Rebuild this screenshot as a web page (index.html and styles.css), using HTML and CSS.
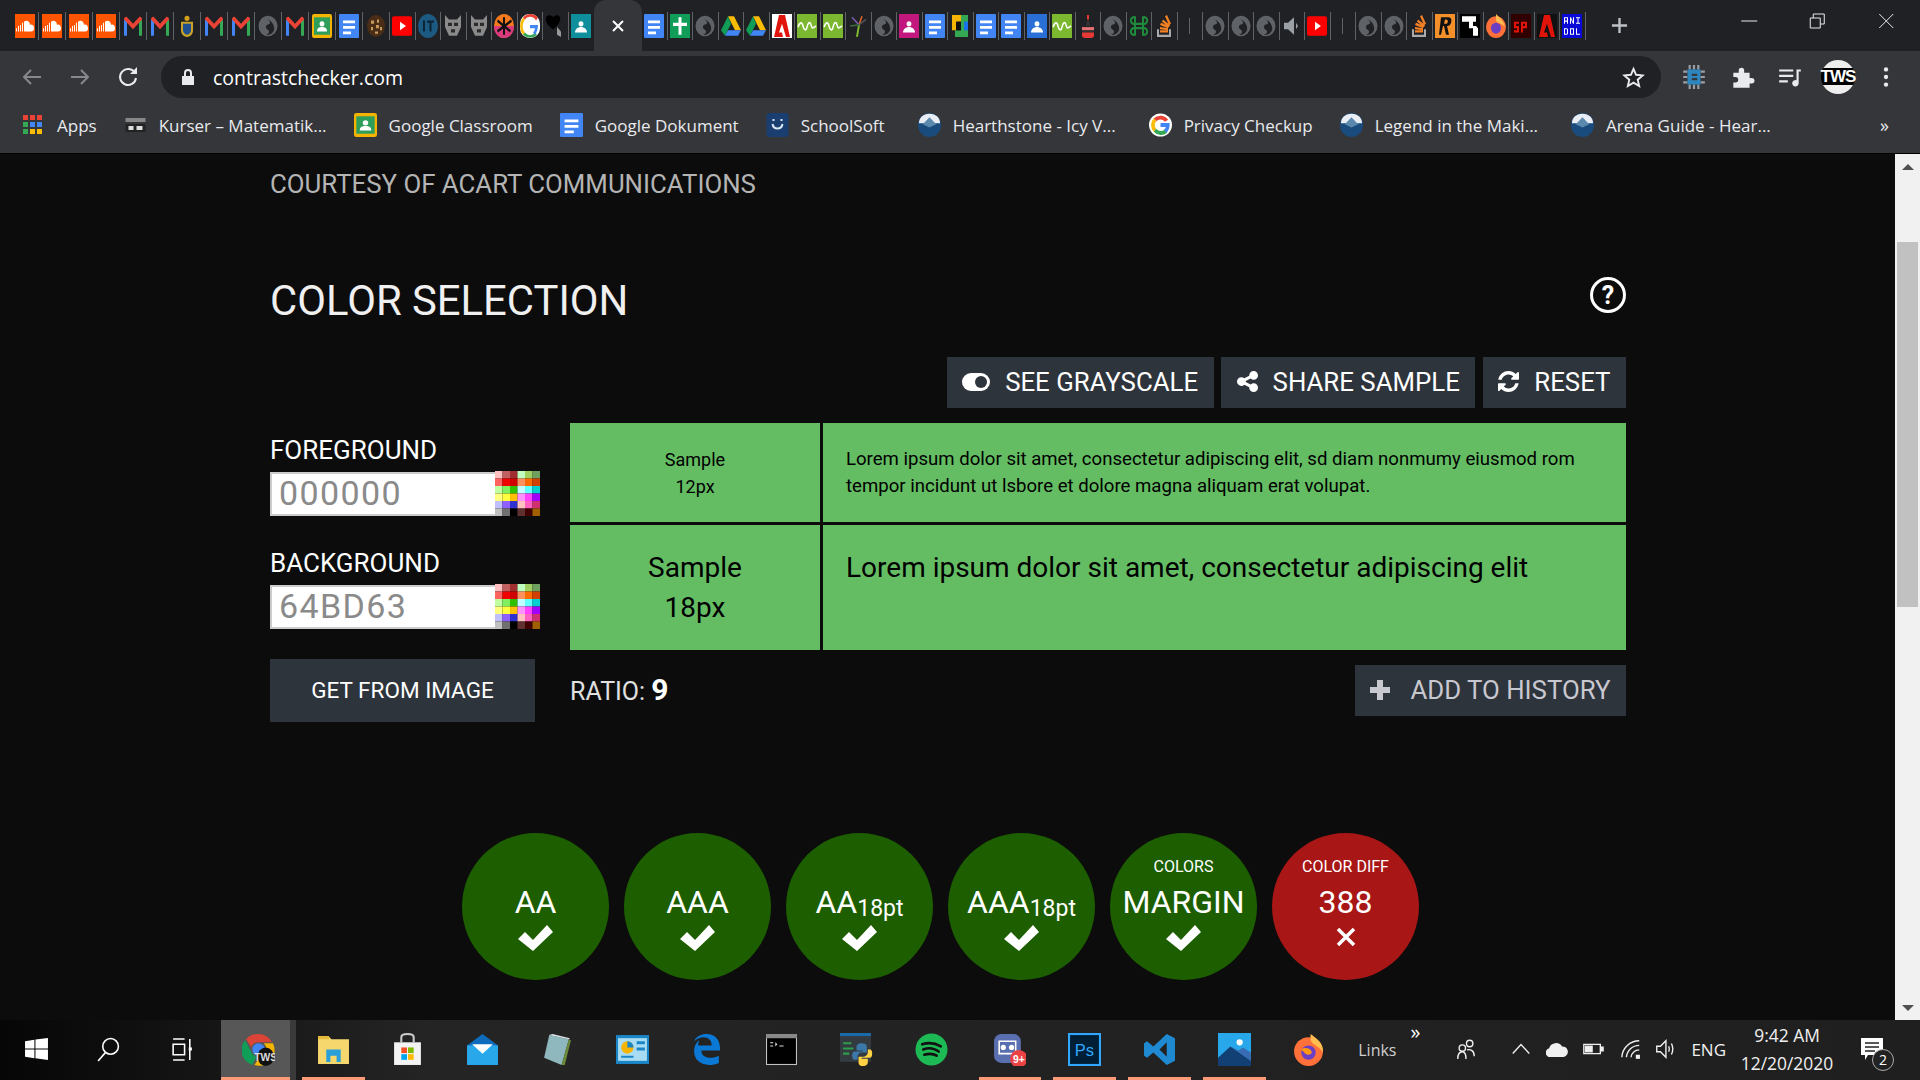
FILE: index.html
```html
<!DOCTYPE html>
<html lang="en">

<head>
  <meta charset="UTF-8">
  <meta name="viewport" content="width=device-width, initial-scale=1.0">
  <title>Contrast Checker</title>
  <link rel="stylesheet" href="styles.css">
</head>

<body>
  <!-- favicons and other small pictures used more than once -->
  <svg class="defs" width="0" height="0">
    <symbol id="sc" viewBox="0 0 20 22" preserveAspectRatio="none">
      <rect width="20" height="22" fill="#f50" />
      <path d="M1 16v-3h1v3zm2 0v-5h1v5zm2 0v-6h1v6zm2 0V8h1v8zm2 0V7c3-2 6 0 6 3 2-1 4 1 4 3s-1 3-3 3z" fill="#fff" />
    </symbol>
    <symbol id="gm" viewBox="0 0 20 22" preserveAspectRatio="none">
      <path d="M1 20V5l3 2v13z" fill="#4285f4" />
      <path d="M16 20V7l3-2v15z" fill="#34a853" />
      <path d="M1 5c0-2 2-3 3-2l6 6 6-6c1-1 3 0 3 2l-9 9z" fill="#ea4335" />
    </symbol>
    <symbol id="crest" viewBox="0 0 20 22" preserveAspectRatio="none">
      <circle cx="10" cy="4" r="2.5" fill="#d4a017" />
      <path d="M4 7h12v8c0 4-3 6-6 6s-6-2-6-6z" fill="#c9a227" />
      <path d="M6 9h8v6c0 2-2 4-4 4s-4-2-4-4z" fill="#1d4f91" />
    </symbol>
    <symbol id="globe" viewBox="0 0 20 22" preserveAspectRatio="none">
      <circle cx="10" cy="11" r="9.500" fill="#5f6368" />
      <path d="M7 4c3 1 5 2 5 4s-4 1-4 4 3 2 3 4-2 3-3 3c3 1 7-1 8-4s-1-9-9-11z" fill="#202124" />
    </symbol>
    <symbol id="classroom" viewBox="0 0 20 22" preserveAspectRatio="none">
      <rect width="20" height="22" rx="2" fill="#f5b400" />
      <rect x="2" y="3" width="16" height="16" fill="#2f9e5b" />
      <circle cx="10" cy="9" r="2.4" fill="#fff" />
      <path d="M5 16c0-3 2-4 5-4s5 1 5 4z" fill="#fff" />
    </symbol>
    <symbol id="teal" viewBox="0 0 20 22" preserveAspectRatio="none">
      <rect width="20" height="22" fill="#0f8f9c" />
      <circle cx="10" cy="9" r="2.4" fill="#fff" />
      <path d="M4 17c0-3 3-5 6-5s6 2 6 5z" fill="#fff" />
    </symbol>
    <symbol id="pink" viewBox="0 0 20 22" preserveAspectRatio="none">
      <rect width="20" height="22" fill="#c2187e" />
      <circle cx="10" cy="9" r="2.4" fill="#fff" />
      <path d="M4 17c0-3 3-5 6-5s6 2 6 5z" fill="#fff" />
    </symbol>
    <symbol id="bluep" viewBox="0 0 20 22" preserveAspectRatio="none">
      <rect width="20" height="22" fill="#2a6fd6" />
      <circle cx="10" cy="9" r="2.4" fill="#fff" />
      <path d="M4 17c0-3 3-5 6-5s6 2 6 5z" fill="#fff" />
    </symbol>
    <symbol id="doc" viewBox="0 0 20 22" preserveAspectRatio="none">
      <rect width="20" height="22" rx="1" fill="#4285f4" />
      <path d="M4 6h12v2.500H4zm0 5h12v2.500H4zm0 5h8v2.500H4z" fill="#fff" />
    </symbol>
    <symbol id="cookie" viewBox="0 0 20 22" preserveAspectRatio="none">
      <ellipse cx="10" cy="11" rx="9" ry="10" fill="#4a2d16" />
      <path d="M5 6h3v3H5zm6-1h2v3h-2zm-6 7h2v3H5zm5-2h3v3h-3zm-1 6h3v2H9zm5-4h2v3h-2z" fill="#c79a5a" />
    </symbol>
    <symbol id="yt" viewBox="0 0 20 22" preserveAspectRatio="none">
      <rect y="2" width="20" height="18" rx="2" fill="#f00" />
      <path d="M8 7l6 4-6 4z" fill="#fff" />
    </symbol>
    <symbol id="wolf" viewBox="0 0 20 22" preserveAspectRatio="none">
      <path d="M2 1l4 4h8l4-4v11l-4 8H6l-4-8z" fill="#8a8a8a" />
      <path d="M5 8h4v3H5zm6 0h4v3h-4zM8 14h4v3H8z" fill="#2b2b2b" />
    </symbol>
    <symbol id="ast" viewBox="0 0 20 22" preserveAspectRatio="none">
      <ellipse cx="10" cy="11" rx="10" ry="11" fill="#f4791f" />
      <path d="M0 11h20c0 6-4 11-10 11S0 17 0 11z" fill="#d93a7c" />
      <path d="M9 3h2v16H9zM3 7l1-2 13 10-1 2zm14-2l1 2L4 17l-1-2z" fill="#111" />
    </symbol>
    <symbol id="g" viewBox="0 0 20 22" preserveAspectRatio="none">
      <rect width="20" height="22" rx="9" fill="#fff" />
      <path d="M16 6a7 8 0 0 0-11-1L3 3.500a10 10 0 0 1 15 0z" fill="#ea4335" />
      <path d="M5 5a7 8 0 0 0 0 12l-2 2a10 11 0 0 1 0-15.500z" fill="#fbbc05" />
      <path d="M5 17a7 8 0 0 0 10 0l2 2a10 10 0 0 1-14 0z" fill="#34a853" />
      <path d="M10 10h8c0 3-1 7-3 9l-2-2c1-1 2-3 2-4h-5z" fill="#4285f4" />
    </symbol>
    <symbol id="heart" viewBox="0 0 20 22" preserveAspectRatio="none">
      <path d="M1 3c2-3 6-2 7 0 2-2 5-3 7 0 1 3-1 7-7 11C3 11 0 7 1 3z" fill="#000" />
      <path d="M12 12l4 4v5l-4-2z" fill="#999" />
    </symbol>
    <symbol id="cross" viewBox="0 0 20 22" preserveAspectRatio="none">
      <rect width="20" height="22" fill="#0f9d58" />
      <path d="M8.500 3h3v5H17v3h-5.500v8h-3v-8H3V8h5.500z" fill="#fff" />
    </symbol>
    <symbol id="drive" viewBox="0 0 20 22" preserveAspectRatio="none">
      <path d="M7 2h6l7 13h-6z" fill="#fbbc05" />
      <path d="M7 2l3 7-6 11-4-5z" fill="#0f9d58" />
      <path d="M4 20l3-5h13l-3 5z" fill="#4285f4" />
    </symbol>
    <symbol id="adobe" viewBox="0 0 20 22" preserveAspectRatio="none">
      <rect width="20" height="22" fill="#fff" />
      <path d="M7 1h6l5 20h-4l-4-12-3 8h3l1 4H2z" fill="#e1140b" />
    </symbol>
    <symbol id="adobek" viewBox="0 0 20 22" preserveAspectRatio="none">
      <rect width="20" height="22" fill="#111" />
      <path d="M7 1h6l5 20h-4l-4-12-3 8h3l1 4H2z" fill="#e1140b" />
    </symbol>
    <symbol id="wave" viewBox="0 0 20 22" preserveAspectRatio="none">
      <rect width="20" height="22" fill="#7cb82f" />
      <path d="M1 12c2-5 4-5 5-1s3 5 4 1 3-6 4-2 2 3 5 1" fill="none" stroke="#fff" stroke-width="1.500" />
    </symbol>
    <symbol id="pin" viewBox="0 0 20 22" preserveAspectRatio="none">
      <path d="M9 21l2-11" stroke="#7cb82f" stroke-width="2" />
      <path d="M11 10l3-8" stroke="#e0662a" stroke-width="1.500" />
      <path d="M11 10l7-5" stroke="#555" stroke-width="1.500" />
      <path d="M11 10L4 3" stroke="#7a5fb0" stroke-width="1.500" />
      <path d="M11 10l-9 1" stroke="#3a6a3a" stroke-width="1.500" />
    </symbol>
    <symbol id="meet" viewBox="0 0 20 22" preserveAspectRatio="none">
      <path d="M2 1h9v6H7v8H2z" fill="#f5b400" />
      <path d="M11 1h7v20H5v-6h6z" fill="#34a853" />
      <rect x="6" y="7" width="5" height="8" fill="#111" />
      <path d="M14 7h4v8h-4z" fill="#1a73e8" />
    </symbol>
    <symbol id="bottle" viewBox="0 0 20 22" preserveAspectRatio="none">
      <path d="M9 1h2v4H9z" fill="#e53935" />
      <path d="M9 6h2l1 5H8z" fill="#333" />
      <path d="M4 12h12v3H4z" fill="#e57373" />
      <path d="M4 15h12v2H4z" fill="#333" />
      <path d="M4 17h12v3c0 1-1 2-3 2H7c-2 0-3-1-3-2z" fill="#e53935" />
    </symbol>
    <symbol id="knot" viewBox="0 0 20 22" preserveAspectRatio="none">
      <path d="M6 3a3 3 0 1 0-2 6h12a3 3 0 1 0-2-6v16a3 3 0 1 0 2-6H4a3 3 0 1 0 2 6z" fill="none" stroke="#1e8a3c" stroke-width="2" />
    </symbol>
    <symbol id="stack" viewBox="0 0 20 22" preserveAspectRatio="none">
      <path d="M3 14v7h14v-7h-2v5H5v-5z" fill="#aaa" />
      <path d="M6 15h8v2H6zm0-3l8 1v2l-8-1zm1-4l8 3-1 2-8-3zm2-3l7 5-1 2-7-5zm4-4l4 8-2 1-4-8z" fill="#f48024" />
    </symbol>
    <symbol id="speaker" viewBox="0 0 20 22" preserveAspectRatio="none">
      <path d="M2 8h4l6-5v16l-6-5H2z" fill="#9aa0a6" />
      <path d="M14 8l2 3-2 3z" fill="#9aa0a6" />
    </symbol>
    <symbol id="blackbox" viewBox="0 0 20 22" preserveAspectRatio="none">
      <rect width="20" height="22" fill="#000" />
      <path d="M2 2h14v5h-3v4h3l2 2v7h-5v-7H9V7H2z" fill="#fff" />
    </symbol>
    <symbol id="firefox" viewBox="0 0 20 22" preserveAspectRatio="none">
      <ellipse cx="10" cy="12" rx="10" ry="10" fill="#ff7139" />
      <path d="M10 0c3 3 8 6 9 12-3-4-8-3-9-6z" fill="#ffbd4f" />
      <circle cx="10" cy="13" r="5" fill="#6a3fc4" />
    </symbol>
    <symbol id="hearth" viewBox="0 0 24 28" preserveAspectRatio="none">
      <ellipse cx="12" cy="14" rx="12" ry="14" fill="#1a4b7d" />
      <path d="M12 1C5 1 1 6 1 12h22c0-6-4-11-11-11z" fill="#e8eef3" />
      <path d="M5 13l7-8 7 8-7 4z" fill="#5b88ad" />
    </symbol>
    <symbol id="gcolor" viewBox="0 0 24 24">
      <circle cx="12" cy="12" r="12" fill="#fff" />
      <path d="M20 6.500a10 10 0 0 0-15-1.500L7.500 8a6 6 0 0 1 9 .5z" fill="#ea4335" />
      <path d="M5 5a10 10 0 0 0 0 14l2.500-3a6 6 0 0 1 0-8z" fill="#fbbc05" />
      <path d="M5 19a10 10 0 0 0 14 1l-3-3a6 6 0 0 1-8.500-1z" fill="#34a853" />
      <path d="M12 10h9.500c.5 4-1 8-3 10l-3-3c1-.8 1.800-2 2-3H12z" fill="#4285f4" />
    </symbol>
    <symbol id="check" viewBox="0 0 37 28">
      <path d="M1 15l7-7 8 8L30 1l6 7-20 19z" fill="#fff" />
    </symbol>
    <symbol id="swatches" viewBox="0 0 6 6" preserveAspectRatio="none">
      <rect width="1" height="1" x="0" y="0" fill="#ffc0c0" /><rect width="1" height="1" x="1" y="0" fill="#c06060" /><rect width="1" height="1" x="2" y="0" fill="#a03030" /><rect width="1" height="1" x="3" y="0" fill="#c0ffc0" /><rect width="1" height="1" x="4" y="0" fill="#a0d060" /><rect width="1" height="1" x="5" y="0" fill="#70a060" />
      <rect width="1" height="1" x="0" y="1" fill="#ff6060" /><rect width="1" height="1" x="1" y="1" fill="#f00000" /><rect width="1" height="1" x="2" y="1" fill="#d00000" /><rect width="1" height="1" x="3" y="1" fill="#ff9060" /><rect width="1" height="1" x="4" y="1" fill="#ff6a00" /><rect width="1" height="1" x="5" y="1" fill="#d04000" />
      <rect width="1" height="1" x="0" y="2" fill="#c0ffa0" /><rect width="1" height="1" x="1" y="2" fill="#80f060" /><rect width="1" height="1" x="2" y="2" fill="#30c000" /><rect width="1" height="1" x="3" y="2" fill="#c0ffff" /><rect width="1" height="1" x="4" y="2" fill="#60ffff" /><rect width="1" height="1" x="5" y="2" fill="#00d0d0" />
      <rect width="1" height="1" x="0" y="3" fill="#ffff80" /><rect width="1" height="1" x="1" y="3" fill="#ffff40" /><rect width="1" height="1" x="2" y="3" fill="#ffc000" /><rect width="1" height="1" x="3" y="3" fill="#ff90ff" /><rect width="1" height="1" x="4" y="3" fill="#ff40ff" /><rect width="1" height="1" x="5" y="3" fill="#a000ff" />
      <rect width="1" height="1" x="0" y="4" fill="#c0c0ff" /><rect width="1" height="1" x="1" y="4" fill="#9060ff" /><rect width="1" height="1" x="2" y="4" fill="#3030d0" /><rect width="1" height="1" x="3" y="4" fill="#ffc0c0" /><rect width="1" height="1" x="4" y="4" fill="#ff60c0" /><rect width="1" height="1" x="5" y="4" fill="#d03070" />
      <rect width="1" height="1" x="0" y="5" fill="#c0c0c0" /><rect width="1" height="1" x="1" y="5" fill="#707070" /><rect width="1" height="1" x="2" y="5" fill="#000000" /><rect width="1" height="1" x="3" y="5" fill="#603030" /><rect width="1" height="1" x="4" y="5" fill="#400000" /><rect width="1" height="1" x="5" y="5" fill="#a06000" />
    </symbol>
  </svg>

  <!-- tabs -->
  <div class="tabstrip">
    <div class="tab wide"><svg class="fav"><use href="#sc" /></svg></div>
    <div class="tab wide"><svg class="fav"><use href="#sc" /></svg></div>
    <div class="tab wide"><svg class="fav"><use href="#sc" /></svg></div>
    <div class="tab wide"><svg class="fav"><use href="#sc" /></svg></div>
    <div class="tab wide"><svg class="fav"><use href="#gm" /></svg></div>
    <div class="tab wide"><svg class="fav"><use href="#gm" /></svg></div>
    <div class="tab wide"><svg class="fav"><use href="#crest" /></svg></div>
    <div class="tab wide"><svg class="fav"><use href="#gm" /></svg></div>
    <div class="tab wide"><svg class="fav"><use href="#gm" /></svg></div>
    <div class="tab wide"><svg class="fav"><use href="#globe" /></svg></div>
    <div class="tab wide"><svg class="fav"><use href="#gm" /></svg></div>
    <div class="tab wide"><svg class="fav"><use href="#classroom" /></svg></div>
    <div class="tab wide"><svg class="fav"><use href="#doc" /></svg></div>
    <div class="tab wide"><svg class="fav"><use href="#cookie" /></svg></div>
    <div class="tab"><svg class="fav"><use href="#yt" /></svg></div>
    <div class="tab">
      <svg class="fav" viewBox="0 0 20 22" preserveAspectRatio="none">
        <ellipse cx="10" cy="11" rx="10" ry="11" fill="#1c5a82" />
        <path d="M5 6h2v10H5zM9 6h7v2h-2.500v8h-2V8H9z" fill="#0b2436" />
      </svg>
    </div>
    <div class="tab"><svg class="fav"><use href="#wolf" /></svg></div>
    <div class="tab"><svg class="fav"><use href="#wolf" /></svg></div>
    <div class="tab"><svg class="fav"><use href="#ast" /></svg></div>
    <div class="tab"><svg class="fav"><use href="#g" /></svg></div>
    <div class="tab"><svg class="fav"><use href="#heart" /></svg></div>
    <div class="tab no-sep"><svg class="fav"><use href="#teal" /></svg></div>
    <div class="tab-active">
      <svg class="tab-close" viewBox="0 0 14 14"><path d="M2 2l10 10M12 2L2 12" /></svg>
    </div>
    <div class="tab"><svg class="fav"><use href="#doc" /></svg></div>
    <div class="tab"><svg class="fav"><use href="#cross" /></svg></div>
    <div class="tab"><svg class="fav"><use href="#globe" /></svg></div>
    <div class="tab"><svg class="fav"><use href="#drive" /></svg></div>
    <div class="tab"><svg class="fav"><use href="#drive" /></svg></div>
    <div class="tab"><svg class="fav"><use href="#adobe" /></svg></div>
    <div class="tab"><svg class="fav"><use href="#wave" /></svg></div>
    <div class="tab"><svg class="fav"><use href="#wave" /></svg></div>
    <div class="tab"><svg class="fav"><use href="#pin" /></svg></div>
    <div class="tab"><svg class="fav"><use href="#globe" /></svg></div>
    <div class="tab"><svg class="fav"><use href="#pink" /></svg></div>
    <div class="tab"><svg class="fav"><use href="#doc" /></svg></div>
    <div class="tab"><svg class="fav"><use href="#meet" /></svg></div>
    <div class="tab"><svg class="fav"><use href="#doc" /></svg></div>
    <div class="tab"><svg class="fav"><use href="#doc" /></svg></div>
    <div class="tab"><svg class="fav"><use href="#bluep" /></svg></div>
    <div class="tab"><svg class="fav"><use href="#wave" /></svg></div>
    <div class="tab"><svg class="fav"><use href="#bottle" /></svg></div>
    <div class="tab"><svg class="fav"><use href="#globe" /></svg></div>
    <div class="tab"><svg class="fav"><use href="#knot" /></svg></div>
    <div class="tab"><svg class="fav"><use href="#stack" /></svg></div>
    <div class="tab tab-blank"><span class="tick"></span></div>
    <div class="tab"><svg class="fav"><use href="#globe" /></svg></div>
    <div class="tab"><svg class="fav"><use href="#globe" /></svg></div>
    <div class="tab"><svg class="fav"><use href="#globe" /></svg></div>
    <div class="tab"><svg class="fav"><use href="#speaker" /></svg></div>
    <div class="tab"><svg class="fav"><use href="#yt" /></svg></div>
    <div class="tab tab-blank"><span class="tick"></span></div>
    <div class="tab"><svg class="fav"><use href="#globe" /></svg></div>
    <div class="tab"><svg class="fav"><use href="#globe" /></svg></div>
    <div class="tab"><svg class="fav"><use href="#stack" /></svg></div>
    <div class="tab">
      <svg class="fav" viewBox="0 0 20 22" preserveAspectRatio="none">
        <rect width="20" height="22" fill="#f4902a" />
        <path d="M6 3h7c3 0 4 2 3 5s-3 3-4 3l2 8h-3l-2-8h-1l-2 8H4zm4 2l-1 4h2c2 0 3-4 0-4z" fill="#111" />
      </svg>
    </div>
    <div class="tab"><svg class="fav"><use href="#blackbox" /></svg></div>
    <div class="tab"><svg class="fav"><use href="#firefox" /></svg></div>
    <div class="tab">
      <svg class="fav" viewBox="0 0 20 22" preserveAspectRatio="none">
        <rect width="20" height="22" fill="#300000" />
        <path d="M3 7h5v2H5v2h3v6H3v-2h3v-2H3zm7 0h6v6h-4v4h-2zm2 2v2h2V9z" fill="#e1140b" />
      </svg>
    </div>
    <div class="tab"><svg class="fav"><use href="#adobek" /></svg></div>
    <div class="tab">
      <svg class="fav" viewBox="0 0 20 22" preserveAspectRatio="none">
        <rect width="20" height="22" fill="#0a0ad6" />
        <path d="M2 3h4v6H5V7H3v2H2zm1 1v2h2V4zm5-1h1l2 4V3h1v6h-1L9 5v4H8zm6 0h4v1h-1.500v4H18v1h-4V8h1.500V4H14zM2 13h3l1 1v4l-1 1H2zm1 1v4h2v-4zm5-1h4v6H8zm1 1v4h2v-4zm5-1h1v5h3v1h-4z" fill="#fff" />
      </svg>
    </div>
    <svg class="new-tab" viewBox="0 0 18 18"><path d="M9 1v16M1 9h16" /></svg>
    <div class="window-btns">
      <svg class="win-btn" viewBox="0 0 16 16"><path d="M0 8h16" /></svg>
      <svg class="win-btn" viewBox="0 0 16 16"><path d="M1 5h10v10H1zM4 5V1h11v10h-4" /></svg>
      <svg class="win-btn" viewBox="0 0 16 16"><path d="M1 1l14 14M15 1L1 15" /></svg>
    </div>
  </div>

  <!-- address bar -->
  <div class="toolbar">
    <svg class="nav-btn dim" viewBox="0 0 24 24"><path d="M21 12H4M11 5l-7 7 7 7" /></svg>
    <svg class="nav-btn dim" viewBox="0 0 24 24"><path d="M3 12h17M13 5l7 7-7 7" /></svg>
    <svg class="nav-btn" viewBox="0 0 24 24"><path d="M19 8a8 8 0 1 0 1 5" /><path class="solid" d="M14 9h7V2z" /></svg>
    <div class="omnibox">
      <svg class="lock" viewBox="0 0 14 18"><path d="M1 8h12v9H1z" /><path class="ring" d="M4 8V5a3 3 0 0 1 6 0v3" /></svg>
      <span class="url">contrastchecker.com</span>
      <svg class="star" viewBox="0 0 24 24"><path d="M12 3l2.700 6.200 6.800.600-5.100 4.500 1.500 6.600L12 17.400 6.100 20.900l1.500-6.600L2.500 9.800l6.800-.600z" /></svg>
    </div>
    <div class="ext-btns">
      <svg class="ext" viewBox="0 0 24 24"><path d="M2 7h4M2 12h4M2 17h4M18 7h4M18 12h4M18 17h4M8 1v4M12 1v4M16 1v4M8 19v4M12 19v4M16 19v4" stroke="#9aa0a6" stroke-width="2" /><rect x="6" y="5" width="12" height="14" fill="#2d86bd" /><rect x="10" y="9" width="5" height="2" fill="#35363a" /><rect x="10" y="13" width="5" height="2" fill="#35363a" /></svg>
      <svg class="ext" viewBox="0 0 24 24"><path d="M4 8h5V6a2.500 2.500 0 0 1 5 0v2h5v5h2a2.500 2.500 0 0 1 0 5h-2v4H4v-5h2a2.500 2.500 0 0 0 0-5H4z" fill="#e8eaed" /></svg>
      <svg class="ext" viewBox="0 0 24 24"><path d="M2 5h13v2H2zm0 5h13v2H2zm0 5h8v2H2zm16-10h4v2h-2v11a3 3 0 1 1-2-3z" fill="#e8eaed" /></svg>
      <div class="ext-slot">
        <div class="avatar">TWS</div>
      </div>
      <svg class="ext" viewBox="0 0 24 24"><circle cx="12" cy="5" r="2" fill="#e8eaed" /><circle cx="12" cy="12" r="2" fill="#e8eaed" /><circle cx="12" cy="19" r="2" fill="#e8eaed" /></svg>
    </div>
  </div>

  <!-- bookmarks -->
  <div class="bookmarks">
    <a class="mark apps-mark">
      <svg class="mark-ico apps" viewBox="0 0 20 20">
        <path fill="#ea4335" d="M0 0h5v5H0zM7 0h5v5H7zM14 0h5v5h-5z" />
        <path fill="#4285f4" d="M7 7h5v5H7zM14 7h5v5h-5z" />
        <path fill="#34a853" d="M0 7h5v5H0zM0 14h5v5H0z" />
        <path fill="#fbbc05" d="M7 14h5v5H7zM14 14h5v5h-5z" />
      </svg>Apps
    </a>
    <a class="mark">
      <svg class="mark-ico" viewBox="0 0 22 24"><path d="M1 5h20v4H1z" fill="#888" /><path d="M1 11h20v8H1z" fill="#222" /><path d="M4 13h5v4H4zm8 0h6v4h-6z" fill="#ddd" /></svg>Kurser – Matematik...
    </a>
    <a class="mark"><svg class="mark-ico"><use href="#classroom" /></svg>Google Classroom</a>
    <a class="mark"><svg class="mark-ico"><use href="#doc" /></svg>Google Dokument</a>
    <a class="mark">
      <svg class="mark-ico" viewBox="0 0 22 24"><rect width="22" height="24" rx="3" fill="#1a3e70" /><path d="M6 11c1 6 9 6 10 0" fill="none" stroke="#d8e6f5" stroke-width="2" /><path d="M6 6h2v2H6zm8 0h2v2h-2z" fill="#d8e6f5" /></svg>SchoolSoft
    </a>
    <a class="mark pushed"><svg class="mark-ico"><use href="#hearth" /></svg>Hearthstone - Icy V...</a>
    <a class="mark pushed"><svg class="mark-ico"><use href="#gcolor" /></svg>Privacy Checkup</a>
    <a class="mark"><svg class="mark-ico"><use href="#hearth" /></svg>Legend in the Maki...</a>
    <a class="mark pushed"><svg class="mark-ico"><use href="#hearth" /></svg>Arena Guide - Hear...</a>
    <span class="more-marks">»</span>
  </div>

  <!-- the page -->
  <div class="viewport">
    <main class="page">
      <p class="courtesy">COURTESY OF ACART COMMUNICATIONS</p>

      <div class="title-row">
        <h2>COLOR SELECTION</h2>
        <svg class="help" viewBox="0 0 36 36">
          <circle cx="18" cy="18" r="16.500" />
          <text x="18" y="27" text-anchor="middle">?</text>
        </svg>
      </div>

      <div class="actions">
        <button class="btn">
          <svg class="btn-ico toggle" viewBox="0 0 28 18"><rect width="28" height="18" rx="9" fill="#fff" /><circle cx="19" cy="9" r="6" fill="#2e343b" /></svg>
          SEE GRAYSCALE
        </button>
        <button class="btn">
          <svg class="btn-ico" viewBox="128 128 1536 1536"><path d="M1344 1024q133 0 226.500 93.500t93.500 226.500-93.500 226.500-226.500 93.500-226.500-93.500-93.500-226.500q0-12 2-34l-360-180q-92 86-218 86-133 0-226.500-93.500t-93.500-226.500 93.500-226.500 226.500-93.500q126 0 218 86l360-180q-2-22-2-34 0-133 93.500-226.500t226.500-93.500 226.500 93.500 93.500 226.500-93.500 226.500-226.500 93.500q-126 0-218-86l-360 180q2 22 2 34t-2 34l360 180q92-86 218-86z" fill="#fff" /></svg>
          SHARE SAMPLE
        </button>
        <button class="btn">
          <svg class="btn-ico" viewBox="0 0 1536 1536"><path d="M1511 928q0 5-1 7-64 268-268 434.500t-478 166.500q-146 0-282.500-55t-243.500-157l-129 129q-19 19-45 19t-45-19-19-45v-448q0-26 19-45t45-19h448q26 0 45 19t19 45-19 45l-137 137q71 66 161 102t187 36q134 0 250-65t186-179q11-17 53-117 8-23 30-23h192q13 0 22.500 9.500t9.500 22.500zm25-800v448q0 26-19 45t-45 19h-448q-26 0-45-19t-19-45 19-45l138-138q-148-137-349-137-134 0-250 65t-186 179q-11 17-53 117-8 23-30 23h-199q-13 0-22.500-9.500t-9.500-22.500v-7q65-268 270-434.500t480-166.500q146 0 284 55.500t245 156.500l130-129q19-19 45-19t45 19 19 45z" fill="#fff" /></svg>
          RESET
        </button>
      </div>

      <div class="selection">
        <div class="colors">
          <label class="field-label">FOREGROUND</label>
          <div class="picker">
            <input class="hex" type="text" value="000000">
            <svg class="swatches"><use href="#swatches" /></svg>
          </div>
          <label class="field-label second">BACKGROUND</label>
          <div class="picker">
            <input class="hex" type="text" value="64BD63">
            <svg class="swatches"><use href="#swatches" /></svg>
          </div>
          <button class="get-image">GET FROM IMAGE</button>
        </div>

        <div class="result">
          <div class="samples">
            <div class="sample small">Sample<br>12px</div>
            <div class="sample-text small">Lorem ipsum dolor sit amet, consectetur adipiscing elit, sd diam nonmumy eiusmod rom tempor incidunt ut lsbore et dolore magna aliquam erat volupat.</div>
            <div class="sample large">Sample<br>18px</div>
            <div class="sample-text large">Lorem ipsum dolor sit amet, consectetur adipiscing elit</div>
          </div>
          <div class="ratio-row">
            <div class="ratio">RATIO: <b>9</b></div>
            <button class="btn muted">
              <svg class="btn-ico plus" viewBox="0 0 20 20"><path d="M7 0h6v7h7v6h-7v7H7v-7H0V7h7z" fill="#c8c8d0" /></svg>
              ADD TO HISTORY
            </button>
          </div>
        </div>
      </div>

      <div class="badges">
        <div class="badge">
          <div class="badge-top"></div>
          <div class="badge-main">AA</div>
          <svg class="badge-check"><use href="#check" /></svg>
        </div>
        <div class="badge">
          <div class="badge-top"></div>
          <div class="badge-main">AAA</div>
          <svg class="badge-check"><use href="#check" /></svg>
        </div>
        <div class="badge">
          <div class="badge-top"></div>
          <div class="badge-main">AA<small>18pt</small></div>
          <svg class="badge-check"><use href="#check" /></svg>
        </div>
        <div class="badge">
          <div class="badge-top"></div>
          <div class="badge-main">AAA<small>18pt</small></div>
          <svg class="badge-check"><use href="#check" /></svg>
        </div>
        <div class="badge">
          <div class="badge-top">COLORS</div>
          <div class="badge-main">MARGIN</div>
          <svg class="badge-check"><use href="#check" /></svg>
        </div>
        <div class="badge fail">
          <div class="badge-top">COLOR DIFF</div>
          <div class="badge-main">388</div>
          <svg class="badge-x" viewBox="0 0 20 20"><path d="M2 2l16 16M18 2L2 18" /></svg>
        </div>
      </div>
    </main>

    <div class="scrollbar">
      <span class="arrow-up"></span>
      <div class="thumb"></div>
      <span class="arrow-down"></span>
    </div>
  </div>

  <!-- windows taskbar -->
  <footer class="taskbar">
    <div class="sys-btn win-start">
      <svg viewBox="0 0 24 24" class="task-ico small"><path d="M1 4l9-1.300V11H1zM11 2.500L23 1v10H11zM1 12h9v8.300L1 19zM11 12h12v10l-12-1.500z" fill="#fff" /></svg>
    </div>
    <div class="sys-btn">
      <svg viewBox="0 0 24 24" class="task-ico small"><circle cx="14" cy="9" r="7.500" fill="none" stroke="#fff" stroke-width="1.500" /><path d="M9 15l-7 8" stroke="#fff" stroke-width="1.500" /></svg>
    </div>
    <div class="sys-btn wide">
      <svg viewBox="0 0 24 24" class="task-ico small"><path d="M3 2h11M3 22h11M3 7h11v10H3zM19 2v20" fill="none" stroke="#fff" stroke-width="1.500" /><rect x="18" y="10" width="3" height="3" fill="#fff" /></svg>
    </div>

    <div class="task active running">
      <svg viewBox="0 0 32 32" class="task-ico">
        <path d="M16 1a15 15 0 0 1 13 8H16a7 7 0 0 0-7 5L4 6a15 15 0 0 1 12-5z" fill="#db4437" />
        <path d="M3 7l7 13a7 7 0 0 0 4 3l-4 8A15 15 0 0 1 3 7z" fill="#0f9d58" />
        <path d="M30 10a15 15 0 0 1-18 21l6-9a7 7 0 0 0 3-12z" fill="#f4b400" />
        <circle cx="16" cy="16" r="6" fill="#4285f4" />
        <ellipse cx="23" cy="23" rx="8" ry="9" fill="#111" />
        <text x="23" y="27" font-family="Liberation Sans" font-size="10" font-weight="700" text-anchor="middle" fill="#ddd">TWS</text>
      </svg>
    </div>
    <div class="task running">
      <svg viewBox="0 0 32 32" class="task-ico"><path d="M1 3h10l3 3h17v24H1z" fill="#f5d76e" /><path d="M1 3h10l1 3H1z" fill="#e5b93a" /><path d="M9 16h14v12h-4v-6h-6v6H9z" fill="#2a9fd8" /></svg>
    </div>
    <div class="task">
      <svg viewBox="0 0 32 32" class="task-ico"><path d="M3 9h26v22H3z" fill="#f3f3f3" /><path d="M10 9V4c0-4 12-4 12 0v5" fill="none" stroke="#ccc" stroke-width="2" /><path d="M10 14h5.500v5.500H10z" fill="#f25022" /><path d="M16.500 14H22v5.500h-5.500z" fill="#7fba00" /><path d="M10 20.500h5.500V26H10z" fill="#00a4ef" /><path d="M16.500 20.500H22V26h-5.500z" fill="#ffb900" /></svg>
    </div>
    <div class="task">
      <svg viewBox="0 0 32 32" class="task-ico"><path d="M16 1l15 11v19H1V12z" fill="#0f6cbd" /><path d="M1 12h30v19H1z" fill="#28a8ea" /><path d="M6 11h20l-10 9z" fill="#fff" /></svg>
    </div>
    <div class="task">
      <svg viewBox="0 0 32 32" class="task-ico"><path d="M8 2l19 4-7 25L3 24z" fill="#8fb8be" /><path d="M8 2l3-1 17 4-1 1z" fill="#e0e8ea" /><path d="M20 31l7-25 2 1-6 24z" fill="#6a8a3a" /></svg>
    </div>
    <div class="task">
      <svg viewBox="0 0 32 32" class="task-ico"><rect y="2" width="32" height="28" fill="#1a86c8" /><rect x="2" y="5" width="28" height="22" fill="#a8dcf2" /><circle cx="11" cy="14" r="6" fill="#f4b400" /><path d="M11 14V8a6 6 0 0 1 6 6z" fill="#1a86c8" /><path d="M20 8h8v3h-8zm0 6h8v3h-8zm-15 8h12v2H5z" fill="#1a86c8" /></svg>
    </div>
    <div class="task">
      <svg viewBox="0 0 32 32" class="task-ico"><path d="M16 1c9 0 14 7 13 16H11c0 7 9 9 17 5v7c-12 5-24 0-24-11C4 13 6 9 9 7c-1 2-1 4-1 5h13c0-5-3-8-8-8-3 0-6 1-9 4 2-5 7-7 12-7z" fill="#0a78d4" /></svg>
    </div>
    <div class="task">
      <svg viewBox="0 0 32 32" class="task-ico"><rect x="1" y="1" width="30" height="30" fill="#c8c8c8" /><rect x="1" y="1" width="30" height="4" fill="#888" /><rect x="2" y="5" width="28" height="25" fill="#000" /><path d="M5 9h3v1H5zm0 3h3v1H5zm5-3l2 2-2 2zm4 3h4v1h-4z" fill="#ddd" /></svg>
    </div>
    <div class="task">
      <svg viewBox="0 0 32 32" class="task-ico"><rect width="30" height="28" fill="#333a40" /><rect width="30" height="3" fill="#1a6aa8" /><path d="M3 9h8v2H3zm0 5h10v2H3zm0 5h6v2H3z" fill="#2e9e4a" /><path d="M21 10c-4 0-5 2-5 4v3h6v1h-8c-3 0-3 8 0 8h3v-3c0-2 2-4 4-4h5v-6c0-2-2-3-5-3z" fill="#3b78a8" /><path d="M22 32c4 0 5-2 5-4v-3h-6v-1h8c3 0 3-8 0-8h-2v3c0 2-2 4-4 4h-5v6c0 2 2 3 4 3z" fill="#ffd343" /></svg>
    </div>
    <div class="task">
      <svg viewBox="0 0 32 32" class="task-ico"><circle cx="16" cy="16" r="15.500" fill="#1db954" /><path d="M7 11c6-2 13-1 18 2M8 16c5-2 11-1 15 2M9 21c4-1 9-1 12 1" fill="none" stroke="#111" stroke-width="2.500" stroke-linecap="round" /></svg>
    </div>
    <div class="task running shifted">
      <svg viewBox="0 0 32 32" class="task-ico"><rect x="1" y="1" width="26" height="28" rx="7" fill="#5a6fb0" /><circle cx="10" cy="14" r="2.500" fill="#fff" /><circle cx="18" cy="14" r="2.500" fill="#fff" /><path d="M6 8h16v12H6z" fill="none" stroke="#fff" stroke-width="1.500" /><circle cx="25" cy="25" r="8.500" fill="#ed4245" /><text x="25" y="29" font-family="Liberation Sans" font-size="10" font-weight="700" text-anchor="middle" fill="#fff">9+</text></svg>
    </div>
    <div class="task running">
      <svg viewBox="0 0 32 32" class="task-ico"><rect x="1" y="1" width="30" height="30" fill="#001e36" stroke="#31a8ff" stroke-width="2" /><text x="16" y="22" font-family="Liberation Sans" font-size="16" text-anchor="middle" fill="#31a8ff">Ps</text></svg>
    </div>
    <div class="task running">
      <svg viewBox="0 0 32 32" class="task-ico"><path d="M23 1l8 4v22l-8 4-13-12-6 5-3-2v-12l3-2 6 5zm0 8l-7 7 7 7z" fill="#1f8ad2" /></svg>
    </div>
    <div class="task running">
      <svg viewBox="0 0 32 32" class="task-ico"><rect width="32" height="32" fill="#28a8ea" /><circle cx="21" cy="9" r="3" fill="#fff" /><path d="M0 32V24l12-11 20 14v5z" fill="#123f74" /><path d="M12 13l20 14v-8l-8-5-4 3z" fill="#3a6cb4" /></svg>
    </div>
    <div class="task">
      <svg viewBox="0 0 32 32" class="task-ico"><circle cx="16" cy="18" r="14" fill="#ff7139" /><path d="M18 1c5 4 13 8 12 18-3-6-10-7-12-12z" fill="#ffbd4f" /><circle cx="16" cy="19" r="7" fill="#6a3fc4" /><path d="M9 16c4-3 9-1 10 2s-4 4-6 2z" fill="#ff980e" /></svg>
    </div>

    <div class="links">Links</div>
    <span class="links-more">»</span>

    <div class="tray">
      <svg class="tray-ico people" viewBox="0 0 24 24"><circle cx="8" cy="11" r="3.500" /><circle cx="16" cy="6" r="3.500" /><path d="M3 23c0-5 2-8 5-8s4 3 4 8M13 13c3-1 8 0 8 7" /></svg>
      <svg class="tray-ico chevron" viewBox="0 0 24 24"><path d="M3 17l9-10 9 10" /></svg>
      <svg class="tray-ico cloud" viewBox="0 0 24 24"><path d="M5 20a4 4 0 0 1-1-8 7 7 0 0 1 13-2 5 5 0 0 1 2 10z" /></svg>
      <svg class="tray-ico battery" viewBox="0 0 24 24"><path d="M2 7h18v10H2z" /><rect class="fill" x="4" y="9" width="7" height="6" /><rect class="fill" x="21" y="10" width="2" height="4" /></svg>
      <svg class="tray-ico wifi" viewBox="0 0 24 24"><path d="M2 21A19 19 0 0 1 21 3M7 21A14 14 0 0 1 21 8M12 21a9 9 0 0 1 9-8" /><rect class="fill" x="18" y="19" width="3" height="3" /></svg>
      <svg class="tray-ico sound" viewBox="0 0 24 24"><path d="M3 9h4l6-6v18l-6-6H3zM16 9c1 2 1 4 0 6M19 6c2 4 2 8 0 12" /></svg>
      <span class="lang">ENG</span>
      <div class="clock">
        <div>9:42 AM</div>
        <div>12/20/2020</div>
      </div>
      <div class="notify">
        <svg viewBox="0 0 24 24"><path d="M1 1h22v17H8l-3 5v-5H1z" fill="#fff" /><path d="M5 6h14M5 10h14M5 14h10" stroke="#222" stroke-width="1.500" /></svg>
        <span class="notify-count">2</span>
      </div>
    </div>
  </footer>
</body>

</html>
```

FILE: styles.css
```css
* {
  box-sizing: border-box;
}

html,
body {
  margin: 0;
  height: 100%;
  overflow: hidden;
}

body {
  display: flex;
  flex-direction: column;
  background: #0c0c0c;
  font-family: "Open Sans", sans-serif;
  color: #e8eaed;
}

.defs {
  position: absolute;
}

/* tab strip */
.tabstrip {
  display: flex;
  align-items: flex-start;
  height: 51px;
  padding-left: 12px;
  background: #202124;
  flex-shrink: 0;
}

.tab {
  display: flex;
  justify-content: center;
  align-items: center;
  width: 25.5px;
  height: 28px;
  margin-top: 12px;
  border-right: 1px solid #5f6368;
  flex-shrink: 0;
}

.tab.wide {
  width: 27px;
}

.tab.no-sep {
  border-right: 0;
}

.tab-blank {
  border-right: 1px solid #5f6368;
}

.tick {
  width: 1px;
  height: 16px;
  background: #5f6368;
}

.fav {
  width: 20px;
  height: 24px;
}

.tab-active {
  display: flex;
  justify-content: center;
  align-items: center;
  width: 48px;
  height: 51px;
  background: #35363a;
  border-radius: 12px 12px 0 0;
  flex-shrink: 0;
}

.tab-close {
  width: 14px;
  height: 14px;
  fill: none;
  stroke: #fff;
  stroke-width: 2;
}

.new-tab {
  width: 17px;
  height: 17px;
  margin: 17px 0 0 25px;
  fill: none;
  stroke: #bdc1c6;
  stroke-width: 2.500;
  flex-shrink: 0;
}

.window-btns {
  display: flex;
  margin-left: auto;
}

.win-btn {
  width: 68.500px;
  height: 16px;
  margin-top: 13px;
  fill: none;
  stroke: #e8eaed;
  stroke-width: 1;
}

/* address bar */
.toolbar {
  display: flex;
  align-items: center;
  height: 52px;
  padding-left: 8px;
  background: #35363a;
  flex-shrink: 0;
}

.nav-btn {
  width: 24px;
  height: 24px;
  margin: 0 12px;
  fill: none;
  stroke: #e8eaed;
  stroke-width: 2;
  flex-shrink: 0;
}

.nav-btn.dim {
  stroke: #85888c;
}

.nav-btn .solid {
  fill: #e8eaed;
  stroke: none;
}

.omnibox {
  display: flex;
  align-items: center;
  width: 1500px;
  height: 42px;
  margin-left: 9px;
  padding: 0 16px 0 20px;
  background: #202124;
  border-radius: 21px;
}

.lock {
  width: 14px;
  height: 18px;
  fill: #e8eaed;
}

.lock .ring {
  fill: none;
  stroke: #e8eaed;
  stroke-width: 2;
}

.url {
  margin-left: 18px;
  font-size: 19.500px;
  color: #fff;
}

.star {
  width: 23px;
  height: 23px;
  margin-left: auto;
  fill: none;
  stroke: #e8eaed;
  stroke-width: 2;
}

.ext-btns {
  display: flex;
  margin-left: 9px;
}

.ext,
.ext-slot {
  display: flex;
  justify-content: center;
  width: 48px;
  height: 26px;
}

.avatar {
  display: flex;
  justify-content: center;
  align-items: center;
  width: 34px;
  height: 34px;
  margin-top: -4px;
  background: linear-gradient(#eee 0 25%, #000 25% 75%, #eee 75%);
  border-radius: 50%;
  font: 700 17px "Liberation Sans", sans-serif;
  color: #fff;
  letter-spacing: -1px;
}

/* bookmarks */
.bookmarks {
  display: flex;
  align-items: center;
  gap: 27px;
  height: 50px;
  padding: 0 0 6px 23px;
  background: #35363a;
  font-size: 17px;
  color: #e8eaed;
  flex-shrink: 0;
}

.mark {
  display: flex;
  align-items: center;
  gap: 12px;
  white-space: nowrap;
}

.mark.pushed {
  margin-left: 6px;
}

.apps-mark {
  gap: 14px;
}

.mark-ico {
  width: 23px;
  height: 24px;
  flex-shrink: 0;
}

.mark-ico.apps {
  width: 20px;
  height: 20px;
}

.more-marks {
  margin-left: auto;
  margin-right: 31px;
  font-size: 18px;
}

/* page */
.viewport {
  display: flex;
  height: 867px;
  border-top: 1px solid #000;
  flex-shrink: 0;
  overflow: hidden;
}

.page {
  width: 1895px;
  padding-left: 270px;
  flex-shrink: 0;
  font-family: Roboto, sans-serif;
  color: #fff;
}

.courtesy {
  margin: 15px 0 0;
  font-size: 25.800px;
  line-height: 30px;
  color: #b4b4b4;
}

.title-row {
  display: flex;
  justify-content: space-between;
  align-items: flex-start;
  width: 1356px;
  margin-top: 77px;
}

.title-row h2 {
  margin: 0;
  font-size: 41.800px;
  font-weight: 400;
  line-height: 50px;
  color: #f0f0f0;
}

.help {
  width: 36px;
  height: 36px;
  margin-top: 1px;
  fill: none;
  stroke: #fff;
  stroke-width: 3;
}

.help text {
  font: 700 25px Roboto, sans-serif;
  fill: #fff;
  stroke: none;
}

.actions {
  display: flex;
  justify-content: flex-end;
  gap: 7.500px;
  width: 1356px;
  margin-top: 31px;
}

.btn {
  display: flex;
  align-items: center;
  height: 51px;
  padding: 0 15.500px 2px;
  background: #2e343b;
  border: 0;
  font: 400 25.800px Roboto, sans-serif;
  color: #fff;
  white-space: nowrap;
}

.btn-ico {
  width: 21px;
  height: 21px;
  margin-right: 15px;
}

.btn-ico.toggle {
  width: 28px;
  height: 18px;
}

.btn-ico.plus {
  width: 20px;
  height: 20px;
  margin-right: 20px;
}

.btn.muted {
  color: #c8c8d0;
}

.selection {
  display: flex;
  gap: 30px;
  width: 1356px;
  margin-top: 15px;
}

.colors {
  width: 270px;
  padding-top: 14px;
  flex-shrink: 0;
}

.field-label {
  display: block;
  height: 26px;
  margin-bottom: 8px;
  font-size: 26px;
  line-height: 26px;
}

.field-label.second {
  margin-top: 34px;
  margin-bottom: 8px;
}

.picker {
  display: flex;
  align-items: center;
  height: 45px;
}

.hex {
  width: 225px;
  height: 44px;
  padding: 0 7px 2px;
  border: 2px solid #ccc;
  border-right: 0;
  background: #fff;
  font: 400 34px Roboto, sans-serif;
  letter-spacing: 1.400px;
  color: #8a8a8a;
}

.swatches {
  width: 45px;
  height: 45px;
}

.get-image {
  display: block;
  width: 265px;
  height: 63px;
  margin-top: 30px;
  padding-bottom: 3px;
  background: #2e343b;
  border: 0;
  font: 400 22.500px Roboto, sans-serif;
  color: #fff;
}

.result {
  flex: 1;
}

.samples {
  display: grid;
  grid-template-columns: 250px 1fr;
  grid-template-rows: 99px 125px;
  gap: 3px;
  color: #000;
}

.sample {
  display: flex;
  justify-content: center;
  align-items: center;
  background: #64bd63;
  text-align: center;
}

.sample.small {
  font-size: 18px;
  line-height: 27px;
}

.sample.large {
  font-size: 28px;
  line-height: 40px;
}

.sample-text {
  background: #64bd63;
  padding: 23px 23px 0;
}

.sample-text.small {
  grid-column: 2;
  grid-row: 1;
  font-size: 18.600px;
  line-height: 27px;
}

.sample-text.large {
  grid-column: 2;
  grid-row: 2;
  padding-top: 21px;
  font-size: 28px;
  line-height: 44px;
}

.ratio-row {
  display: flex;
  justify-content: space-between;
  align-items: center;
  margin-top: 15px;
}

.ratio {
  padding-bottom: 2px;
  font-size: 25px;
  color: #e0e0e0;
}

.ratio b {
  font-size: 30px;
  color: #fff;
}

.badges {
  display: flex;
  gap: 15px;
  margin: 111px 0 0 192px;
}

.badge {
  display: flex;
  flex-direction: column;
  align-items: center;
  width: 147px;
  height: 147px;
  padding-top: 22px;
  background: #1c5e00;
  border-radius: 50%;
}

.badge.fail {
  background: #a81616;
}

.badge-top {
  height: 24px;
  font-size: 16px;
  line-height: 24px;
}

.badge-main {
  height: 38px;
  margin-top: 4px;
  font-size: 32px;
  line-height: 38px;
  white-space: nowrap;
}

.badge-main small {
  position: relative;
  top: 3px;
  font-size: 23px;
}

.badge-check {
  width: 37px;
  height: 28px;
  margin-top: 3px;
}

.badge-x {
  width: 20px;
  height: 20px;
  margin-top: 6px;
  fill: none;
  stroke: #fff;
  stroke-width: 3.500;
}

.scrollbar {
  display: flex;
  flex-direction: column;
  align-items: center;
  width: 25px;
  background: #f1f1f1;
}

.arrow-up,
.arrow-down {
  width: 0;
  height: 0;
  border-left: 6px solid transparent;
  border-right: 6px solid transparent;
}

.arrow-up {
  margin-top: 10px;
  border-bottom: 6px solid #505050;
}

.arrow-down {
  margin-top: auto;
  margin-bottom: 9px;
  border-top: 6px solid #505050;
}

.thumb {
  width: 21px;
  height: 365px;
  margin-top: 72px;
  background: #c1c1c1;
}

/* taskbar */
.taskbar {
  display: flex;
  height: 60px;
  background: linear-gradient(90deg, #060606, #242424 22%, #1f1f1f);
  flex-shrink: 0;
}

.sys-btn {
  display: flex;
  justify-content: center;
  align-items: center;
  width: 72px;
  height: 58px;
}

.sys-btn.wide {
  width: 77px;
}

.task {
  position: relative;
  display: flex;
  justify-content: center;
  align-items: center;
  width: 74.750px;
  height: 60px;
  padding-bottom: 2px;
}

.task.shifted {
  margin-left: 4px;
}

.task.active {
  background: #575757;
  box-shadow: inset -6px 0 0 #3a3a3a;
}

.task.running::after {
  content: "";
  position: absolute;
  left: 6px;
  right: 6px;
  bottom: 0;
  height: 3px;
  background: #ff9a78;
}

.task.active::after {
  left: 0;
  right: 6px;
}

.task-ico {
  width: 33px;
  height: 33px;
}

.task-ico.small {
  width: 25px;
  height: 25px;
}

.links {
  align-self: center;
  margin-left: 12px;
  padding-bottom: 1px;
  font-size: 16px;
  color: #d0d0d0;
}

.links-more {
  margin: 0 0 0 14px;
  font-size: 20px;
  line-height: 24px;
  color: #fff;
}

.tray {
  display: flex;
  align-items: center;
  margin-left: auto;
  padding-bottom: 2px;
}

.tray-ico {
  width: 22px;
  height: 22px;
  margin-right: 14px;
  fill: none;
  stroke: #f0f0f0;
  stroke-width: 1.500;
}

.tray-ico .fill,
.tray-ico.cloud {
  fill: #f0f0f0;
}

.tray-ico.people {
  margin-right: 33px;
}

.tray-ico.battery {
  margin-right: 16px;
}

.tray-ico.wifi {
  margin-right: 12px;
}

.lang {
  margin-left: 1px;
  font-size: 17px;
  color: #f0f0f0;
}

.clock {
  width: 112px;
  margin-left: 5px;
  text-align: center;
  font-size: 17.400px;
  line-height: 28px;
  color: #f0f0f0;
}

.notify {
  position: relative;
  width: 24px;
  height: 24px;
  margin: 0 36px 0 17px;
}

.notify-count {
  position: absolute;
  right: -10px;
  bottom: -10px;
  width: 22px;
  height: 22px;
  background: #222;
  border: 1px solid #aaa;
  border-radius: 50%;
  text-align: center;
  font-size: 14px;
  line-height: 20px;
  color: #fff;
}
```
